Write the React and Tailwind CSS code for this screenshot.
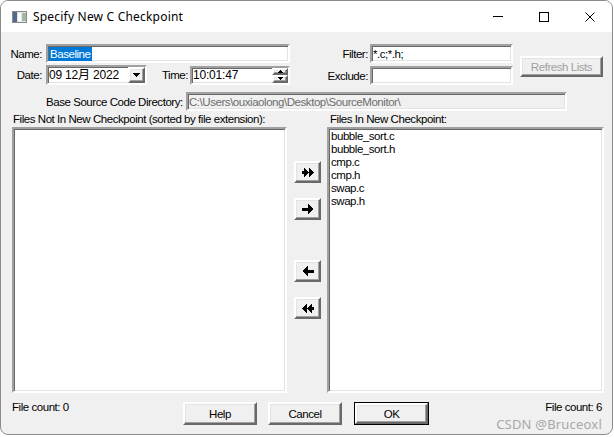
import React from 'react';

// classic win32 3d edges
const sunken =
  'border-2 border-t-[#a0a0a0] border-l-[#a0a0a0] border-r-white border-b-white shadow-[inset_1px_1px_0_#696969,inset_-1px_-1px_0_#e3e3e3]';
const raised =
  'border-2 border-t-white border-l-white border-r-[#696969] border-b-[#696969] shadow-[inset_-1px_-1px_0_#a0a0a0,inset_1px_1px_0_#e3e3e3] bg-[#f0f0f0]';

function ArrowIcon({ double, flip }) {
  const style = flip ? { transform: 'scaleX(-1)' } : undefined;
  if (double) {
    return (
      <svg width="12" height="9" viewBox="0 0 12 9" shapeRendering="crispEdges" style={style}>
        <g fill="#000">
          <rect x="0" y="3" width="3" height="3" />
          <path d="M2 0 L7 4.5 L2 9 Z" />
          <path d="M7 0 L12 4.5 L7 9 Z" />
        </g>
      </svg>
    );
  }
  return (
    <svg width="12" height="10" viewBox="0 0 12 10" shapeRendering="crispEdges" style={style}>
      <g fill="#000">
        <rect x="0" y="3.5" width="7" height="3" />
        <path d="M6 0 L12 5 L6 10 Z" />
      </g>
    </svg>
  );
}

function MoveButton({ double, flip, className = '' }) {
  return (
    <div className={`${raised} w-[27px] h-[22px] flex items-center justify-center ${className}`}>
      <ArrowIcon double={double} flip={flip} />
    </div>
  );
}

function PushButton({ children, className = '', isDefault }) {
  if (isDefault) {
    return (
      <div className={`border border-black ${className}`}>
        <div className={`${raised} w-full h-full flex items-center justify-center`}>{children}</div>
      </div>
    );
  }
  return <div className={`${raised} flex items-center justify-center ${className}`}>{children}</div>;
}

function TitleBar() {
  return (
    <div className="h-[31px] bg-white flex items-center font-['Noto_Sans'] text-[12px] text-black">
      <svg className="ml-[11px]" width="15" height="12" viewBox="0 0 15 12" shapeRendering="crispEdges">
        <rect x="0.5" y="0.5" width="14" height="11" fill="#e4e4e4" stroke="#8a8a8a" />
        <rect x="1" y="1" width="4" height="10" fill="#4d6c8c" />
        <rect x="6" y="2" width="3" height="8" fill="#ffffff" />
        <rect x="10" y="2" width="4" height="8" fill="#9fb8a8" />
      </svg>
      <span className="ml-[6px] leading-[16px] tracking-[0.2px]">Specify New C Checkpoint</span>
      <div className="ml-auto flex h-full">
        <div className="w-[46px] h-full flex items-center justify-center">
          <div className="w-[10px] h-px bg-black" />
        </div>
        <div className="w-[46px] h-full flex items-center justify-center">
          <div className="w-[10px] h-[10px] border border-black" />
        </div>
        <div className="w-[45px] h-full flex items-center justify-center">
          <svg width="10" height="10" viewBox="0 0 10 10">
            <path d="M0.5 0.5 L9.5 9.5 M9.5 0.5 L0.5 9.5" stroke="#000" strokeWidth="1" />
          </svg>
        </div>
      </div>
    </div>
  );
}

export default function App() {
  const files = ['bubble_sort.c', 'bubble_sort.h', 'cmp.c', 'cmp.h', 'swap.c', 'swap.h'];

  return (
    <div className="w-[614px] h-[437px] bg-white">
      <div className="w-[613px] h-[435px] border border-[#8c8c8c] rounded-[8px] overflow-hidden flex flex-col bg-[#f0f0f0]">
        <TitleBar />

        <div className="flex-1 flex flex-col font-['Liberation_Sans','Noto_Sans_CJK_SC',sans-serif] text-[11.5px] tracking-[-0.45px] text-black leading-[14px]">
          {/* top fields */}
          <div className="flex pt-[12px]">
            <div className="w-[289px] flex flex-col">
              <div className="flex items-center h-[19px]">
                <span className="w-[41px] text-right">Name:</span>
                <div className={`${sunken} ml-[4px] w-[244px] h-[19px] bg-white flex items-center pl-[1px]`}>
                  <span className="bg-[#0078d7] text-white px-px">Baseline</span>
                </div>
              </div>
              <div className="flex items-center h-[20px] mt-[2px]">
                <span className="w-[41px] text-right">Date:</span>
                <div className={`${sunken} ml-[4px] w-[101px] h-[20px] bg-white flex items-center`}>
                  <span className="pl-[1px] flex-1 whitespace-nowrap text-[12px] tracking-[-0.2px]">09 12月 2022</span>
                  <div className={`${raised} w-[17px] h-[16px] flex items-center justify-center`}>
                    <svg width="7" height="4" viewBox="0 0 7 4" shapeRendering="crispEdges">
                      <path d="M0 0 H7 L3.5 4 Z" fill="#000" />
                    </svg>
                  </div>
                </div>
                <span className="w-[41px] text-right">Time:</span>
                <div className={`${sunken} ml-[2px] w-[100px] h-[19px] bg-white flex items-center`}>
                  <span className="pl-[1px] flex-1 text-[12px] tracking-[-0.2px]">10:01:47</span>
                  <div className="flex flex-col w-[16px] h-full">
                    <div className={`${raised} flex-1 flex items-center justify-center`}>
                      <svg width="5" height="3" viewBox="0 0 5 3" shapeRendering="crispEdges">
                        <path d="M2.5 0 L5 3 H0 Z" fill="#000" />
                      </svg>
                    </div>
                    <div className={`${raised} flex-1 flex items-center justify-center`}>
                      <svg width="5" height="3" viewBox="0 0 5 3" shapeRendering="crispEdges">
                        <path d="M0 0 H5 L2.5 3 Z" fill="#000" />
                      </svg>
                    </div>
                  </div>
                </div>
              </div>
            </div>

            <div className="flex flex-col">
              <div className="flex items-center h-[19px]">
                <span className="w-[78px] text-right">Filter:</span>
                <div className={`${sunken} ml-[2px] w-[143px] h-[19px] bg-white flex items-center pl-[1px]`}>*.c;*.h;</div>
              </div>
              <div className="flex items-center h-[19px] mt-[3px]">
                <span className="w-[78px] text-right">Exclude:</span>
                <div className={`${sunken} ml-[2px] w-[143px] h-[19px] bg-white`} />
              </div>
            </div>

            <PushButton className="ml-[7px] mt-[12px] w-[83px] h-[21px] text-[#a0a0a0]">Refresh Lists</PushButton>
          </div>

          {/* base directory */}
          <div className="flex items-center mt-[7px] ml-[45px] h-[19px]">
            <span className="w-[137px] whitespace-nowrap">Base Source Code Directory:</span>
            <div className={`${sunken} ml-[3px] w-[381px] h-[19px] flex items-center pl-[1px] text-[#6d6d6d] whitespace-nowrap overflow-hidden`}>
              C:\Users\ouxiaolong\Desktop\SourceMonitor\
            </div>
          </div>

          {/* lists */}
          <div className="flex ml-[11px]">
            <div className="w-[275px] flex flex-col">
              <div className="h-[16px] flex items-center pl-[1px] whitespace-nowrap">Files Not In New Checkpoint (sorted by file extension):</div>
              <div className={`${sunken} h-[266px] bg-white`} />
            </div>

            <div className="w-[40px] flex flex-col pt-[50px] pl-[7px]">
              <MoveButton double />
              <MoveButton className="mt-[15px]" />
              <MoveButton className="mt-[40px]" flip />
              <MoveButton className="mt-[15px]" double flip />
            </div>

            <div className="w-[277px] flex flex-col">
              <div className="h-[16px] flex items-center pl-[3px] whitespace-nowrap">Files In New Checkpoint:</div>
              <div className={`${sunken} h-[266px] bg-white pt-[1px] pl-[2px] leading-[13px]`}>
                {files.map(f => (
                  <div key={f}>{f}</div>
                ))}
              </div>
            </div>
          </div>

          {/* footer */}
          <div className="flex mt-[7px] pl-[11px] pr-[10px]">
            <div className="w-[171px]">File count: 0</div>
            <PushButton className="mt-[2px] w-[74px] h-[23px]">Help</PushButton>
            <PushButton className="mt-[2px] ml-[11px] w-[74px] h-[23px]">Cancel</PushButton>
            <PushButton isDefault className="mt-[2px] ml-[12px] w-[75px] h-[23px]">OK</PushButton>
            <div className="flex-1 flex flex-col items-end">
              <span>File count: 6</span>
              <span className="mt-[3px] font-['Noto_Sans'] text-[13px] leading-[15px] text-[#a8a8a8] tracking-[0.2px]">CSDN @Bruceoxl</span>
            </div>
          </div>
        </div>
      </div>
    </div>
  );
}
